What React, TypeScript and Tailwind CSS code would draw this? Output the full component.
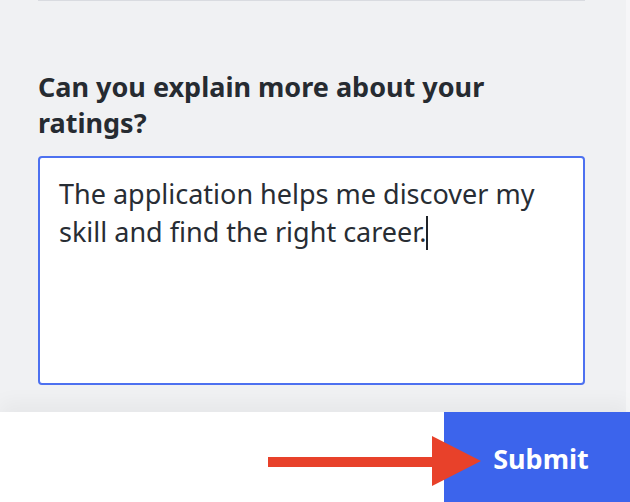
import React from 'react';

export default function App() {
  return (
    <div
      className="relative w-[630px] h-[502px] bg-[#f0f1f3] overflow-hidden flex flex-col"
      style={{ fontFamily: '"Noto Sans", "Open Sans", sans-serif' }}
    >
      {/* Feedback question */}
      <div className="pl-[38px] pr-[45px]">
        <div className="h-px bg-[#d9dbe0]" />
        <h2 className="mt-[68px] text-[27px] leading-[36px] font-bold text-[#262b31]">
          Can you explain more about your
          <br />
          ratings?
        </h2>
        <div className="mt-[15px] h-[229px] bg-white border-2 border-[#4d71f0] rounded-[4px] pl-[19px] pt-[17px] text-[27px] leading-[38px] text-[#282d34]">
          The application helps me discover my
          <br />
          skill and find the right career.
          <span className="inline-block w-[2px] h-[34px] bg-[#1f2329] align-[-8px]" />
        </div>
      </div>

      <div className="flex-1" />

      {/* Footer with submit */}
      <div className="h-[90px] bg-white flex justify-end shadow-[0_-10px_18px_rgba(0,0,0,0.04)]">
        <button className="w-[186px] h-full bg-[#3c64ec] text-white text-[27px] font-bold pl-[8px] pt-[4px]">
          Submit
        </button>
      </div>

      {/* faint scrollbar track on the right */}
      <div className="absolute right-0 top-0 w-[4px] h-[412px] bg-white/40" />

      {/* Annotation arrow */}
      <svg className="absolute left-[268px] top-[436px]" width="216" height="52" viewBox="0 0 216 52">
        <rect x="0" y="21" width="170" height="10" fill="#e8412a" />
        <polygon points="164,0 213,25 164,50" fill="#e8412a" />
      </svg>
    </div>
  );
}
